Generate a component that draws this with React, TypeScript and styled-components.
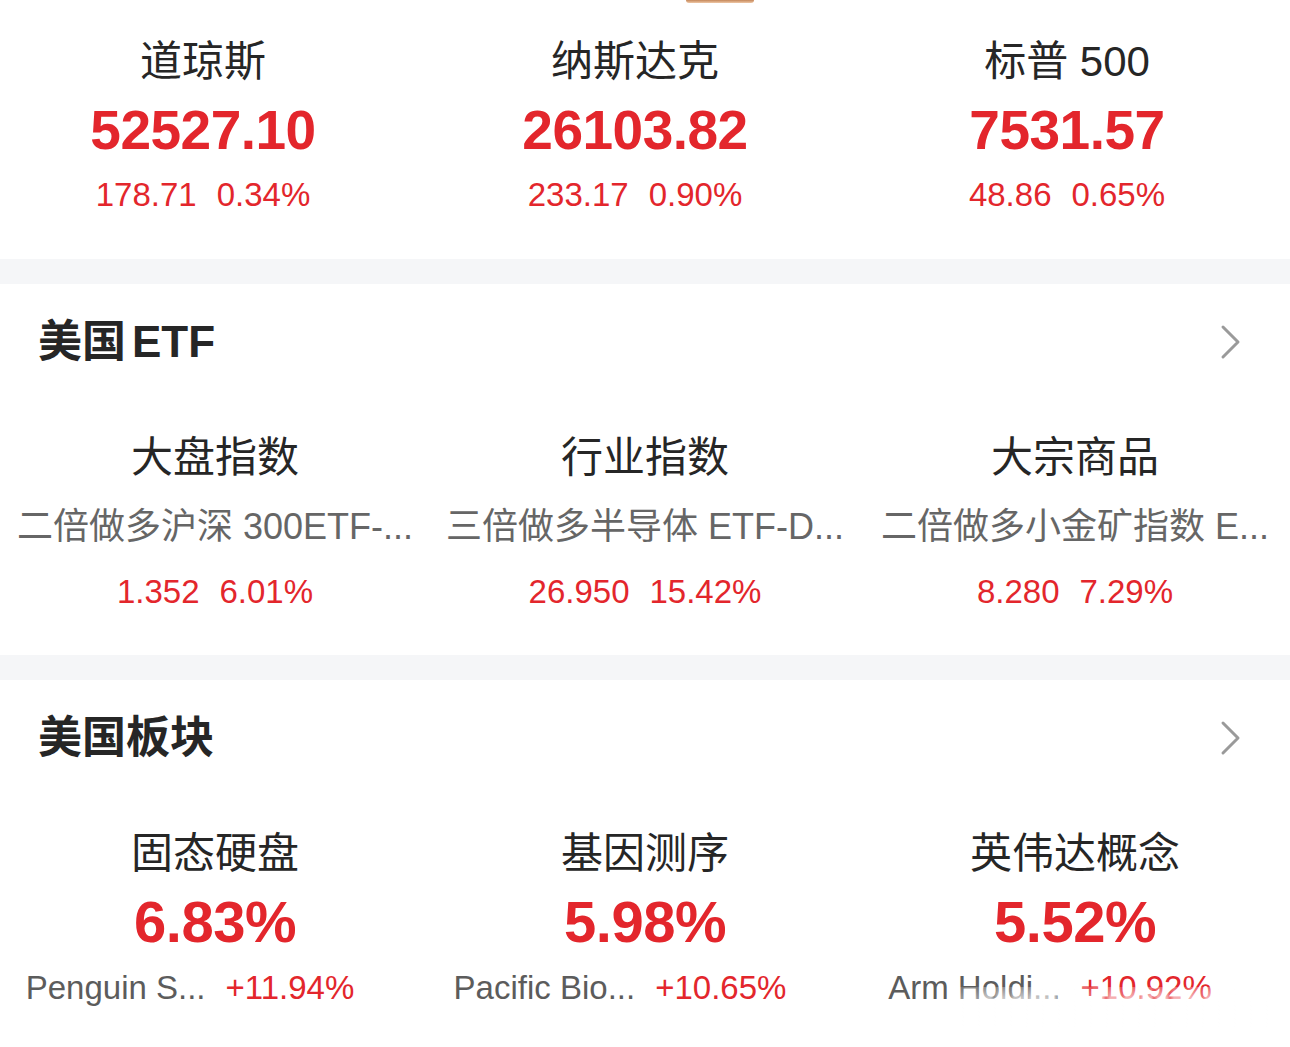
import React from 'react';
import styled, { createGlobalStyle } from 'styled-components';

const RED = '#e3262c';

const GlobalStyle = createGlobalStyle`
  html, body {
    margin: 0;
    padding: 0;
    background: #fff;
  }
  body {
    font-family: 'Liberation Sans', 'Noto Sans CJK SC', sans-serif;
    -webkit-font-smoothing: antialiased;
  }
`;

const Page = styled.div`
  width: 1290px;
  height: 1047px;
  overflow: hidden;
  background: #fff;
`;

/** the tip of the tab bar scrolled off above **/
const TabTip = styled.div`
  width: 68px;
  height: 3px;
  margin-left: 686px;
  border-radius: 0 0 5px 5px;
  background: linear-gradient(to bottom, #c4875a, #efc7a6);
`;

const IndexGrid = styled.div`
  display: grid;
  grid-template-columns: repeat(3, 432px);
  margin-left: -13px;
  padding: 34px 0 39px;
`;

const Cell = styled.div`
  display: flex;
  flex-direction: column;
  align-items: center;
  position: relative;
`;

const Name = styled.div`
  font-size: 42px;
  line-height: 50px;
  color: #262626;
  white-space: nowrap;
`;

const BigNumber = styled.div<{ $size?: number }>`
  margin-top: 13px;
  font-size: ${({ $size }) => $size ?? 55}px;
  font-weight: 700;
  line-height: 60px;
  color: ${RED};
  letter-spacing: -0.5px;
  white-space: nowrap;
`;

const ChangeRow = styled.div<{ $top?: number }>`
  display: flex;
  gap: 20px;
  margin-top: ${({ $top }) => $top ?? 10}px;
  font-size: 33px;
  line-height: 50px;
  color: ${RED};
  white-space: nowrap;
`;

const Band = styled.div`
  height: 25px;
  background: #f5f6f8;
`;

const SectionHeader = styled.div`
  display: flex;
  align-items: center;
  justify-content: space-between;
  height: 115px;
  padding: 0 48px 0 38px;
`;

const SectionTitle = styled.h2`
  margin: 0;
  font-size: 44px;
  font-weight: 700;
  line-height: 50px;
  color: #262626;
  white-space: nowrap;

  span {
    margin-left: 6px;
  }
`;

const Chevron = styled.svg`
  width: 22px;
  height: 36px;
  display: block;
`;

const CardGrid = styled.div<{ $bottom: number }>`
  display: grid;
  grid-template-columns: repeat(3, 1fr);
  padding: 34px 0 ${({ $bottom }) => $bottom}px;
`;

const Subtitle = styled.div`
  margin-top: 19px;
  font-size: 36px;
  line-height: 50px;
  color: #666;
  white-space: nowrap;
`;

const LeaderRow = styled.div`
  display: flex;
  gap: 20px;
  margin-top: 11px;
  padding-right: 50px;
  font-size: 33px;
  line-height: 50px;
  white-space: nowrap;
`;

const LeaderName = styled.span`
  color: #5c5c5c;
`;

const LeaderChange = styled.span`
  color: ${RED};
`;

/** the share watermark smears the bottom of the last card **/
const Smear = styled.div`
  position: absolute;
  left: 90px;
  right: 10px;
  bottom: -14px;
  height: 40px;
  background: repeating-linear-gradient(
    to right,
    rgba(255, 255, 255, 0.95) 0px,
    rgba(255, 255, 255, 0.95) 9px,
    rgba(255, 255, 255, 0.45) 12px,
    rgba(255, 255, 255, 0.95) 16px
  );
  -webkit-mask-image: linear-gradient(to bottom, rgba(0, 0, 0, 0.3), #000 50%);
  mask-image: linear-gradient(to bottom, rgba(0, 0, 0, 0.3), #000 50%);
`;

function ArrowRight() {
  return (
    <Chevron viewBox="0 0 22 36">
      <polyline points="3,3 18,18 3,33" fill="none" stroke="#9a9a9a" strokeWidth="3" strokeLinecap="round" strokeLinejoin="round" />
    </Chevron>
  );
}

const indices = [
  { name: '道琼斯', price: '52527.10', diff: '178.71', pct: '0.34%' },
  { name: '纳斯达克', price: '26103.82', diff: '233.17', pct: '0.90%' },
  { name: '标普 500', price: '7531.57', diff: '48.86', pct: '0.65%' }
];

const etfs = [
  { group: '大盘指数', name: '二倍做多沪深 300ETF-...', price: '1.352', pct: '6.01%' },
  { group: '行业指数', name: '三倍做多半导体 ETF-D...', price: '26.950', pct: '15.42%' },
  { group: '大宗商品', name: '二倍做多小金矿指数 E...', price: '8.280', pct: '7.29%' }
];

const sectors = [
  { name: '固态硬盘', pct: '6.83%', leader: 'Penguin S...', leaderPct: '+11.94%' },
  { name: '基因测序', pct: '5.98%', leader: 'Pacific Bio...', leaderPct: '+10.65%' },
  { name: '英伟达概念', pct: '5.52%', leader: 'Arm Holdi...', leaderPct: '+10.92%', smeared: true }
];

export default function App() {
  return (
    <Page>
      <GlobalStyle />
      <TabTip />

      <IndexGrid>
        {indices.map((item) => (
          <Cell key={item.name}>
            <Name>{item.name}</Name>
            <BigNumber>{item.price}</BigNumber>
            <ChangeRow>
              <span>{item.diff}</span>
              <span>{item.pct}</span>
            </ChangeRow>
          </Cell>
        ))}
      </IndexGrid>

      <Band />
      <SectionHeader>
        <SectionTitle>
          美国<span>ETF</span>
        </SectionTitle>
        <ArrowRight />
      </SectionHeader>
      <CardGrid $bottom={38}>
        {etfs.map((item) => (
          <Cell key={item.group}>
            <Name>{item.group}</Name>
            <Subtitle>{item.name}</Subtitle>
            <ChangeRow $top={15}>
              <span>{item.price}</span>
              <span>{item.pct}</span>
            </ChangeRow>
          </Cell>
        ))}
      </CardGrid>

      <Band />
      <SectionHeader>
        <SectionTitle>美国板块</SectionTitle>
        <ArrowRight />
      </SectionHeader>
      <CardGrid $bottom={30}>
        {sectors.map((item) => (
          <Cell key={item.name}>
            <Name>{item.name}</Name>
            <BigNumber $size={58}>{item.pct}</BigNumber>
            <LeaderRow>
              <LeaderName>{item.leader}</LeaderName>
              <LeaderChange>{item.leaderPct}</LeaderChange>
            </LeaderRow>
            {item.smeared && <Smear />}
          </Cell>
        ))}
      </CardGrid>
    </Page>
  );
}
